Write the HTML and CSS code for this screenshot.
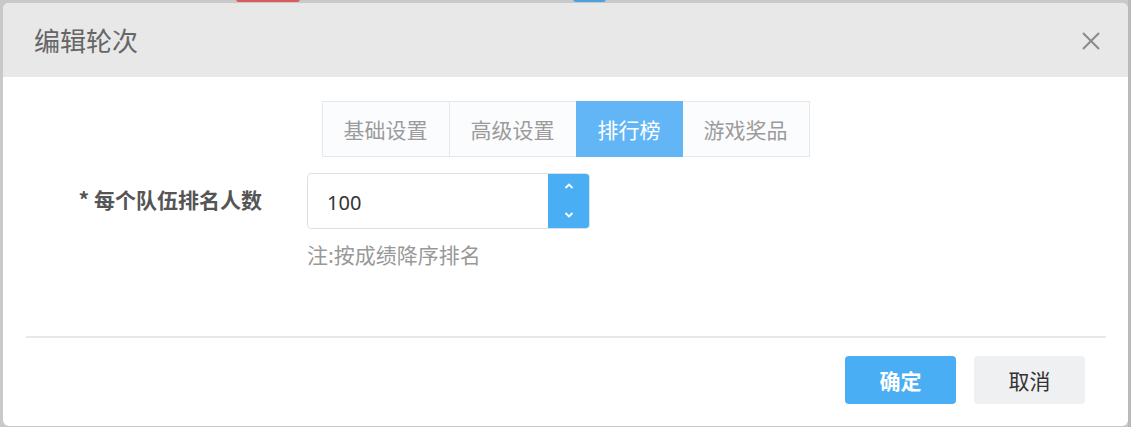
FILE: index.html
```html
<!DOCTYPE html>
<html lang="zh-CN">
<head>
<meta charset="utf-8">
<title>编辑轮次</title>
<link rel="stylesheet" href="styles.css">
</head>
<body>
<div class="backdrop">
  <span class="bd-red"></span>
  <span class="bd-blue"></span>
</div>
<div class="modal">
  <div class="modal-header">
    <div class="modal-title">编辑轮次</div>
    <button class="close-btn" aria-label="关闭">
      <svg width="18" height="18" viewBox="0 0 18 18"><path d="M1 1L17 17M17 1L1 17" stroke="#8a8a8a" stroke-width="2" fill="none"/></svg>
    </button>
  </div>
  <div class="modal-body">
    <div class="tabs">
      <div class="tab">基础设置</div>
      <div class="tab">高级设置</div>
      <div class="tab active">排行榜</div>
      <div class="tab">游戏奖品</div>
    </div>
    <div class="form-row">
      <label class="form-label">* 每个队伍排名人数</label>
      <div class="form-control">
        <div class="number-input">
          <span class="number-value">100</span>
          <div class="spinner">
            <svg class="chev" width="10" height="6" viewBox="0 0 10 6"><path d="M1.5 5L5 1.5L8.5 5" stroke="#fff" stroke-width="1.8" fill="none"/></svg>
            <svg class="chev" width="10" height="6" viewBox="0 0 10 6"><path d="M1.5 1L5 4.5L8.5 1" stroke="#fff" stroke-width="1.8" fill="none"/></svg>
          </div>
        </div>
        <div class="note">注:按成绩降序排名</div>
      </div>
    </div>
  </div>
  <div class="divider"></div>
  <div class="modal-footer">
    <button class="btn btn-primary">确定</button>
    <button class="btn btn-default">取消</button>
  </div>
</div>
</body>
</html>
```
FILE: styles.css
```css
* { box-sizing: border-box; }
html, body { margin: 0; padding: 0; }
body {
  width: 1131px;
  height: 427px;
  overflow: hidden;
  background: #c9c9c9;
  font-family: "Noto Sans CJK SC", "Noto Sans", sans-serif;
  position: relative;
  padding: 3px 3px 0 3px;
}
.backdrop {
  position: absolute;
  left: 0; top: 0;
  width: 1131px; height: 427px;
  background-image: linear-gradient(to right, transparent 1128px, #b9b9b9 1128px);
}
.bd-red {
  position: absolute; left: 236px; top: -4px;
  width: 64px; height: 6px; border-radius: 3px;
  background: #d95b5b;
}
.bd-blue {
  position: absolute; left: 573px; top: -4px;
  width: 33px; height: 6px; border-radius: 3px;
  background: #4f9fdc;
}
.modal {
  position: relative;
  width: 1125px;
  height: 423px;
  background: #fff;
  border-radius: 6px;
  overflow: hidden;
}
.modal-header {
  height: 74px;
  background: #e8e8e8;
  display: flex;
  align-items: center;
  justify-content: space-between;
  padding: 0 28px 0 31px;
}
.modal-title {
  font-size: 26px;
  color: #666;
  line-height: 1;
  margin-top: -1px;
}
.close-btn {
  border: 0;
  background: transparent;
  padding: 0;
  width: 18px; height: 18px;
  display: flex;
  margin-top: 2px;
}
.modal-body {
  padding-top: 24px;
}
.tabs {
  display: flex;
  justify-content: center;
}
.tab {
  height: 56px;
  padding: 0 21px;
  font-size: 21px;
  line-height: 54px;
  color: #9b9b9b;
  background: #fbfcfd;
  border: 1px solid #e6e8eb;
}
.tab + .tab { margin-left: -1px; }
.tab.active {
  background: #63b6f6;
  border-color: #63b6f6;
  color: #fff;
  position: relative;
}
.form-row {
  display: flex;
  margin-top: 16px;
}
.form-label {
  width: 259px;
  text-align: right;
  font-size: 21px;
  font-weight: bold;
  color: #555;
  line-height: 52px;
  white-space: nowrap;
}
.form-control {
  margin-left: 45px;
}
.number-input {
  width: 283px;
  height: 56px;
  border: 1px solid #dcdfe6;
  border-radius: 4px;
  display: flex;
  align-items: center;
  justify-content: space-between;
  overflow: hidden;
}
.number-value {
  padding-left: 19px;
  font-family: "Noto Sans", "Noto Sans CJK SC", sans-serif;
  font-size: 20px;
  color: #333;
  margin-top: 2px;
}
.spinner {
  width: 42px;
  height: 56px;
  margin-right: -1px;
  background: #4aaef5;
  display: flex;
  flex-direction: column;
  align-items: center;
  justify-content: space-between;
  padding: 10px 0 11px 0;
}
.chev { display: block; }
.note {
  margin-top: 10px;
  font-size: 21px;
  line-height: 30px;
  color: #999;
}
.divider {
  height: 2px;
  background: #e8e8e8;
  margin: 67px 22px 0 23px;
}
.modal-footer {
  display: flex;
  justify-content: flex-end;
  padding: 18px 43px 0 0;
  gap: 18px;
}
.btn {
  width: 111px;
  height: 48px;
  border: 0;
  border-radius: 4px;
  font-family: "Noto Sans CJK SC", sans-serif;
  font-size: 21px;
  padding: 0;
}
.btn-primary {
  background: #4aaef5;
  color: #fff;
  font-weight: bold;
}
.btn-default {
  background: #eef0f2;
  color: #333;
}
```
